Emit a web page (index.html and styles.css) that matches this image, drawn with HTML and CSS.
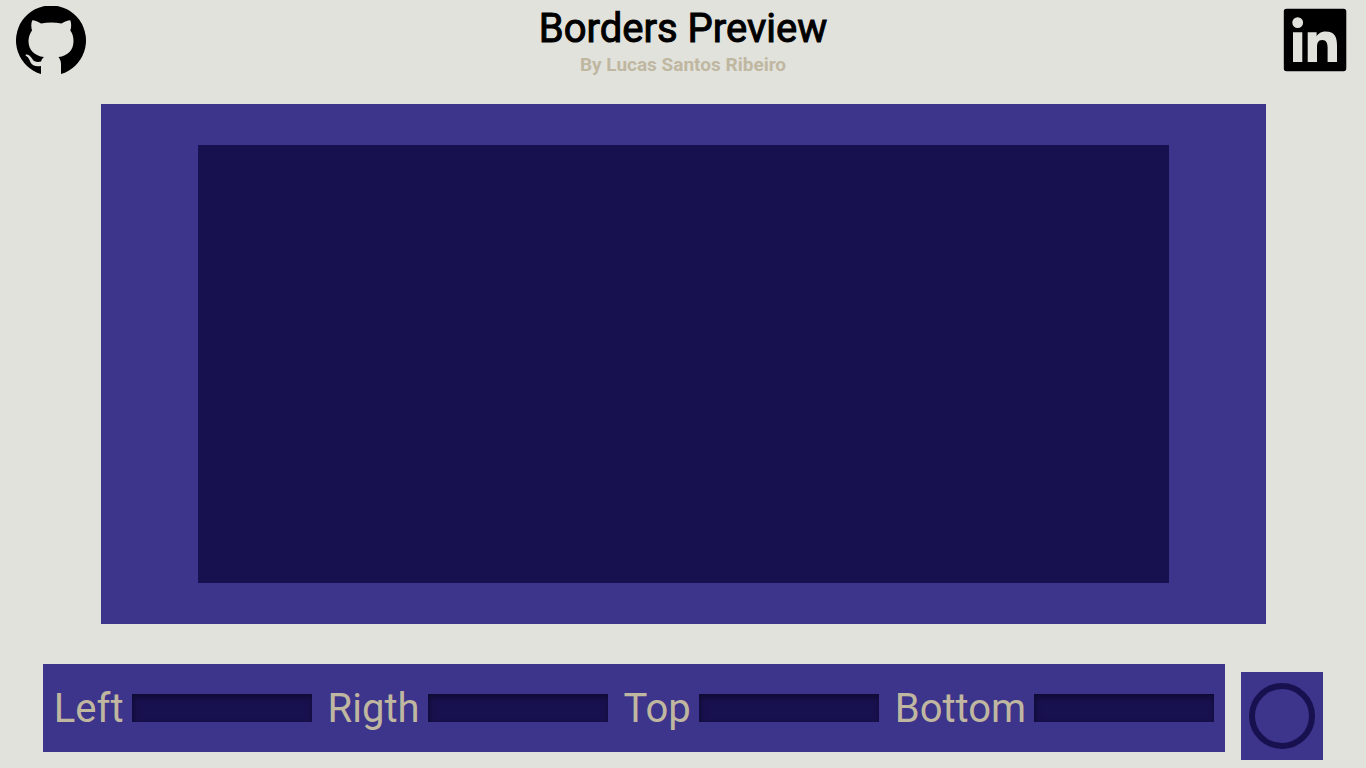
FILE: index.html
```html
<!DOCTYPE html>
<html lang="en">
<head>
<meta charset="utf-8">
<meta name="viewport" content="width=device-width, initial-scale=1">
<title>Borders Preview</title>
<link rel="stylesheet" href="styles.css">
</head>
<body>
<header class="header">
  <a class="social" href="#github" aria-label="GitHub">
    <svg viewBox="0 0 70 70" width="70" height="70" aria-hidden="true">
      <path d="M25 68A35 35 0 1 1 45 68V58C45 55 44 53 42.500 51C52 50 57.500 44 57.500 35C57.500 31 56.500 27 54.300 24.500C55.400 21 55.500 17.500 54.300 14.300C51.500 14.300 48.500 15.600 45.500 17.500C38.500 16.200 32 16.200 25 17.500C22 15.600 19 14.300 16.300 14.300C15 17.500 15 21 16 24.500C14 27 12.500 31 12.500 35C12.500 44 18.500 50 28 51C26 52.500 25.500 54 25 55.500C21 56.500 18 55.500 16.500 53.200C14.500 50 12.500 48.300 10 48.500C9 48.800 9.300 49.700 10.500 50.300C12.500 51.500 13.500 54 14.500 56.300C16 59.500 20 61 25 60Z"/>
    </svg>
  </a>
  <div class="heading">
    <h1 class="title">Borders Preview</h1>
    <h2 class="author">By Lucas Santos Ribeiro</h2>
  </div>
  <a class="social" href="#linkedin" aria-label="LinkedIn">
    <svg viewBox="0 0 70 70" width="70" height="70" aria-hidden="true">
      <path fill-rule="evenodd" d="M6.500 2.800H63.500Q66.300 2.800 66.300 5.500V62.300Q66.300 65.200 63.500 65.200H6.500Q3.800 65.200 3.800 62.300V5.500Q3.800 2.800 6.500 2.800ZM17.700 11.200A5.400 5.400 0 1 0 17.700 22A5.400 5.400 0 1 0 17.700 11.200ZM13 26.300V56H22.300V26.300ZM27.700 26.300V56H37V41.300C37 37.500 38 34 42.200 34C46.500 34 47.600 37.500 47.600 41.500V56H57V39.700C57 31.500 55 25.500 45.500 25.500C41 25.500 38 27.800 36.700 30.300H36.600V26.300Z"/>
    </svg>
  </a>
</header>
<main class="main">
  <section class="stage" aria-label="Preview">
    <div class="preview"></div>
  </section>
  <form class="controls">
    <div class="fields">
      <div class="field"><label for="left">Left</label><input id="left" type="text"></div>
      <div class="field"><label for="right">Rigth</label><input id="right" type="text"></div>
      <div class="field"><label for="top">Top</label><input id="top" type="text"></div>
      <div class="field"><label for="bottom">Bottom</label><input id="bottom" type="text"></div>
    </div>
    <button class="shape" type="button" aria-label="Round shape"><span class="ring"></span></button>
  </form>
</main>
</body>
</html>
```
FILE: styles.css
```css
* {
  box-sizing: border-box;
}

body {
  display: flex;
  flex-direction: column;
  min-height: 100vh;
  margin: 0;
  background: #e1e2dc;
  color: #000;
  font-family: Roboto, sans-serif;
}

.header {
  display: flex;
  justify-content: space-between;
  align-items: flex-start;
  padding: 6px 16px 0;
}

.social {
  color: #000;
}

.social svg {
  display: block;
  fill: currentColor;
}

.heading {
  text-align: center;
}

.title,
.author {
  margin: 0;
}

.title {
  font-size: 40px;
  font-weight: 400;
  line-height: 46px;
  -webkit-text-stroke: 1px currentColor;
}

.author {
  color: #c0b7a1;
  font-size: 19px;
  font-weight: 700;
  line-height: 25px;
}

.main {
  flex: 1;
  display: flex;
  flex-direction: column;
  align-items: center;
  gap: 40px;
  padding: 27px 16px 8px;
}

.stage {
  flex: 1;
  display: flex;
  width: 100%;
  max-width: 1165px;
  padding: 41px 97px;
  background: #3d348b;
}

.preview {
  flex: 1;
  background: #18114f;
}

.controls {
  display: flex;
  gap: 16px;
}

.fields {
  display: flex;
  align-items: center;
  gap: 16px;
  height: 88px;
  padding: 0 11px;
  background: #3d348b;
}

.field {
  display: flex;
  align-items: center;
  gap: 8px;
  color: #c0b7a1;
  font-size: 40px;
  line-height: 48px;
}

.field label {
  padding-top: 2px;
}

.field input {
  width: 180px;
  height: 28px;
  padding: 0 8px;
  border: 0;
  background: #18114f;
  box-shadow: inset 1px 3px 6px rgba(0, 0, 0, 0.4);
  color: #c0b7a1;
  font: 20px Roboto, sans-serif;
}

.shape {
  display: grid;
  place-items: center;
  width: 82px;
  height: 88px;
  margin-top: 8px;
  padding: 0;
  border: 0;
  background: #3d348b;
}

.ring {
  width: 66px;
  height: 66px;
  border: 6px solid #18114f;
  border-radius: 50%;
}
```
